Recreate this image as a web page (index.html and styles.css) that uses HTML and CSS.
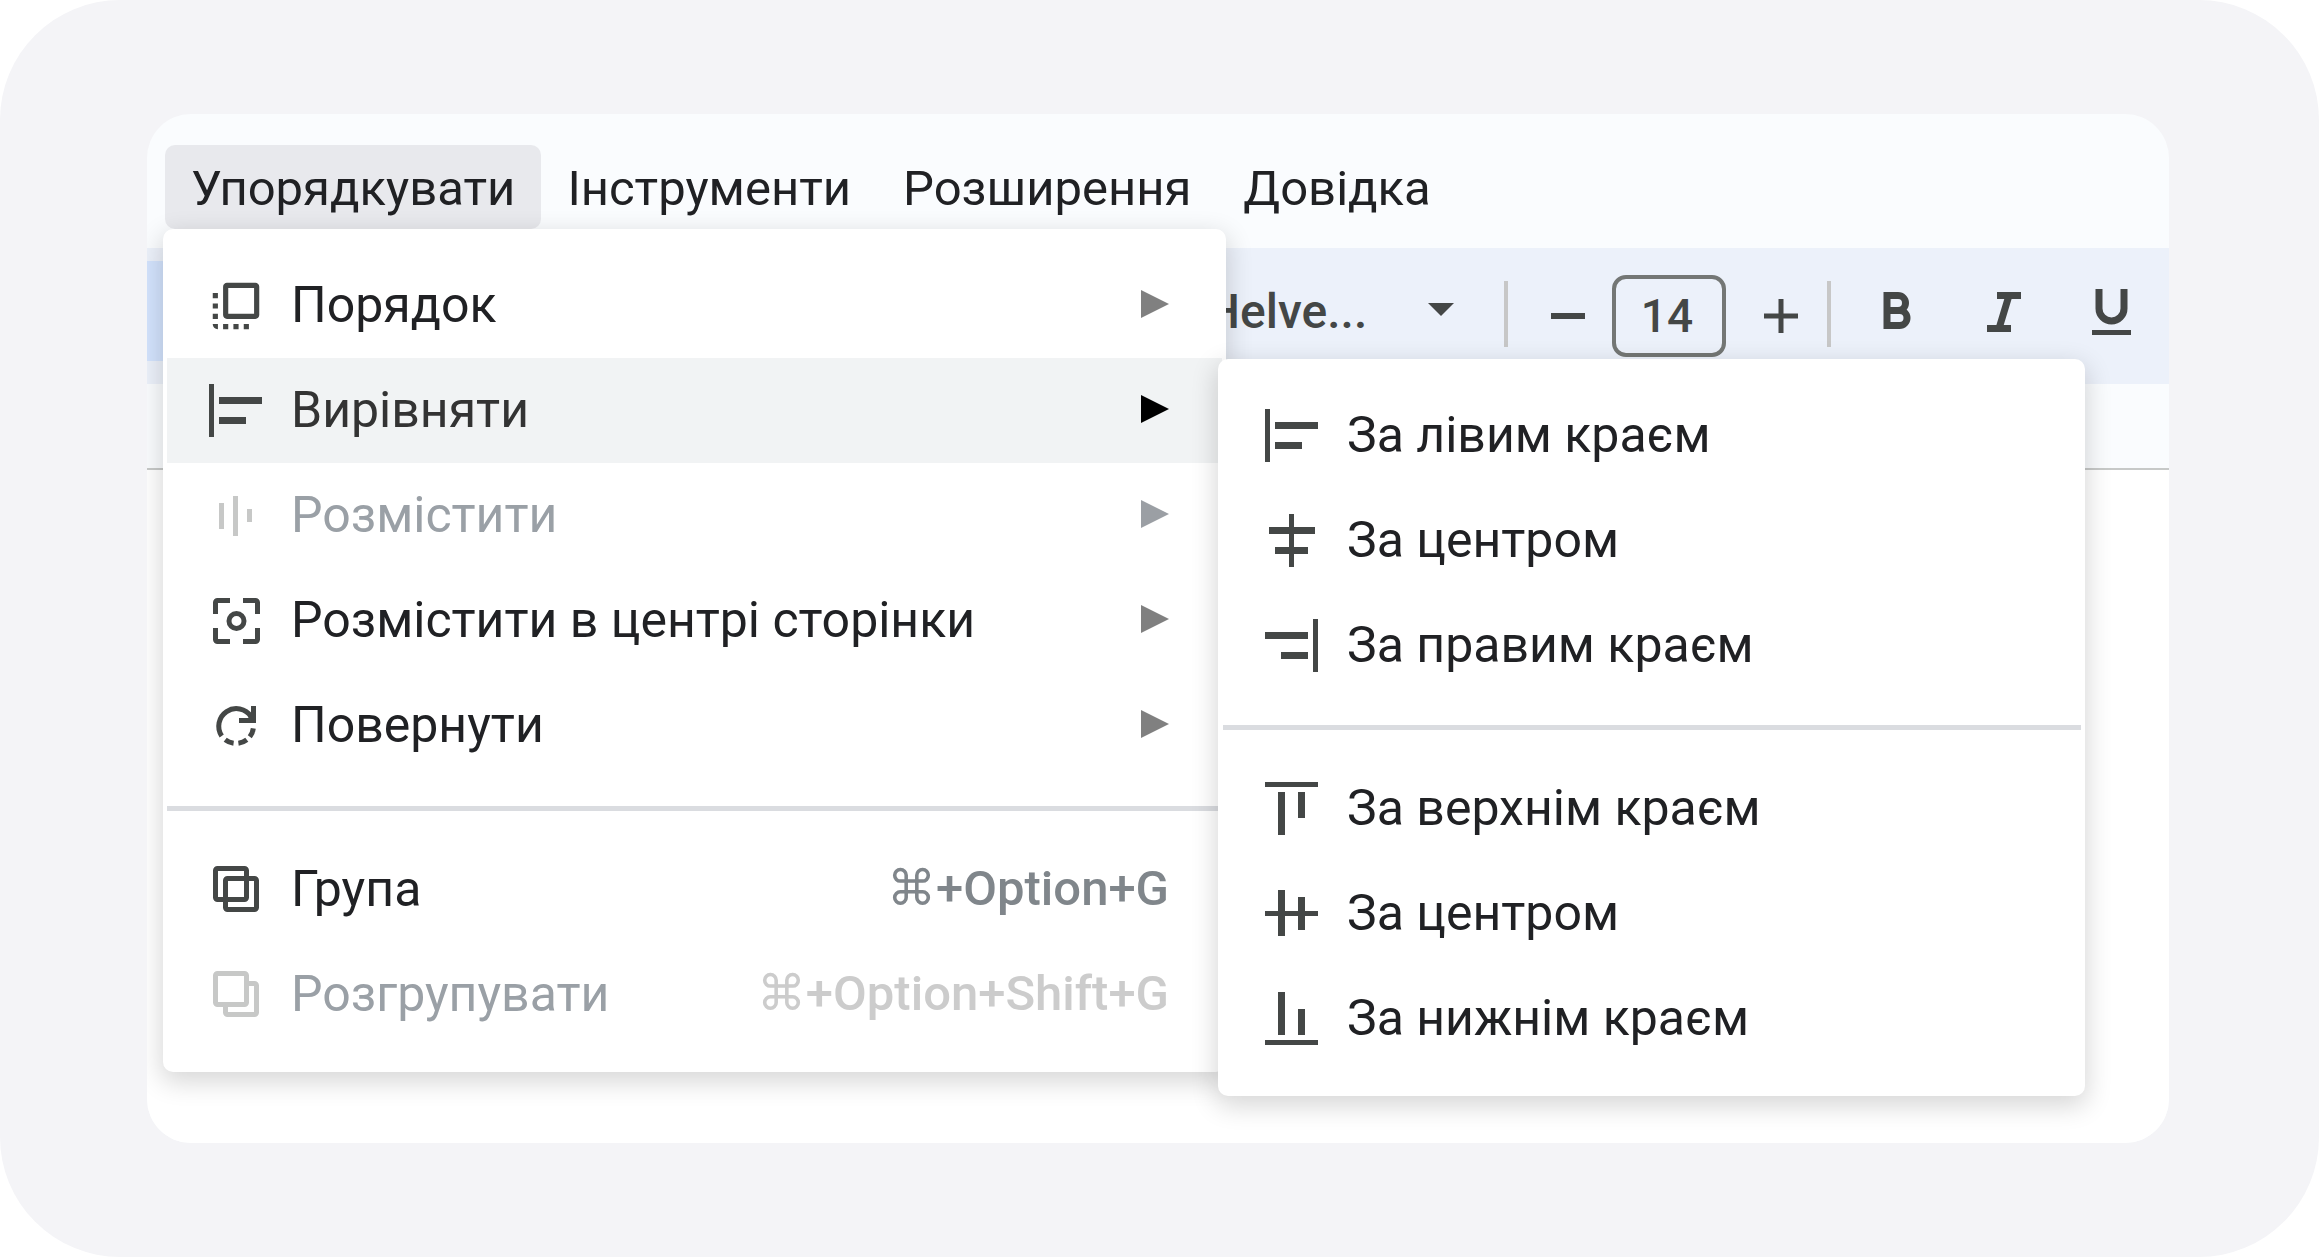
FILE: index.html
```html
<!DOCTYPE html>
<html lang="uk">
<head>
<meta charset="utf-8">
<title>Упорядкувати</title>
<link rel="stylesheet" href="styles.css">
</head>
<body>
<main class="scene">
  <section class="editor">
    <nav class="menubar">
      <button class="menubar-item is-open" type="button">Упорядкувати</button>
      <button class="menubar-item" type="button">Інструменти</button>
      <button class="menubar-item" type="button">Розширення</button>
      <button class="menubar-item" type="button">Довідка</button>
    </nav>

    <div class="toolbar">
      <button class="tool-active" type="button" aria-label="Вибрати"></button>
      <div class="font-picker">
        <select class="font-select" aria-label="Шрифт"><option>Helve...</option></select>
        <svg class="caret" viewBox="0 0 26 13"><path d="M0 0h26L13 13z"/></svg>
      </div>
      <span class="separator"></span>
      <div class="size-picker">
        <button class="tool" type="button" aria-label="Зменшити"><svg class="glyph" viewBox="0 0 34 40"><path d="M0 20h34" stroke-width="6"/></svg></button>
        <input class="size-input" type="text" value="14" aria-label="Розмір шрифту">
        <button class="tool" type="button" aria-label="Збільшити"><svg class="glyph" viewBox="0 0 34 40"><path d="M0 20h34M17 3v34" stroke-width="5"/></svg></button>
      </div>
      <span class="separator"></span>
      <div class="style-tools">
        <button class="tool" type="button" aria-label="Жирний"><svg class="glyph-lg" viewBox="0 0 40 48"><path d="M10 8.500h11a7.500 7.500 0 0 1 0 15H10zM10 23.500h12.500a7.500 7.500 0 0 1 0 15H10z" stroke-width="7"/></svg></button>
        <button class="tool" type="button" aria-label="Курсив"><svg class="glyph-lg" viewBox="0 0 40 48"><path d="M13 8.500h24M3 41.500h24M25 8.500L15 41.500" stroke-width="7"/></svg></button>
        <button class="tool" type="button" aria-label="Підкреслений"><svg class="glyph-lg" viewBox="0 0 40 48"><path d="M8 2v19.500a12.500 12.500 0 0 0 25 0V2" stroke-width="7"/><path d="M1 45.500h39" stroke-width="5"/></svg></button>
      </div>
    </div>

    <div class="ruler"></div>
    <div class="canvas"></div>

    <ul class="menu">
      <li class="menu-row">
        <button class="menu-item" type="button">
          <svg class="icon" viewBox="0 0 24 24"><path d="M3 13h2v-2H3v2zm0 4h2v-2H3v2zm2 4v-2H3c0 1.100.890 2 2 2zM3 9h2V7H3v2zm12 12h2v-2h-2v2zm4.500-18h-11C7.670 3 7 3.670 7 4.500v11c0 .830.670 1.500 1.500 1.500h11c.830 0 1.500-.670 1.500-1.500v-11c0-.830-.670-1.500-1.500-1.500zM19 15H9V5h10v10zm-8 6h2v-2h-2v2zm-4 0h2v-2H7v2z"/></svg>
          <span class="label">Порядок</span>
          <svg class="arrow" viewBox="0 0 28 28"><path d="M0 0l28 14L0 28z"/></svg>
        </button>
      </li>
      <li class="menu-row">
        <button class="menu-item is-active" type="button">
          <svg class="icon" viewBox="0 0 62 62"><path d="M4 4h5v53H4zM14 17h43v7H14zM14 37h27v7H14z"/></svg>
          <span class="label">Вирівняти</span>
          <svg class="arrow" viewBox="0 0 28 28"><path d="M0 0l28 14L0 28z"/></svg>
        </button>
        <ul class="menu submenu">
          <li class="menu-row"><button class="menu-item" type="button">
            <svg class="icon" viewBox="0 0 62 62"><path d="M4 4h5v53H4zM14 17h43v7H14zM14 37h27v7H14z"/></svg>
            <span class="label">За лівим краєм</span></button></li>
          <li class="menu-row"><button class="menu-item" type="button">
            <svg class="icon" viewBox="0 0 62 62"><path d="M28 4h5v53h-5zM8 17h46v7H8zM14 37h33v7H14z"/></svg>
            <span class="label">За центром</span></button></li>
          <li class="menu-row"><button class="menu-item" type="button">
            <svg class="icon" viewBox="0 0 62 62"><path d="M52 4h5v53h-5zM4 17h43v7H4zM20 37h27v7H20z"/></svg>
            <span class="label">За правим краєм</span></button></li>
          <li class="divider" role="separator"></li>
          <li class="menu-row"><button class="menu-item" type="button">
            <svg class="icon" viewBox="0 0 62 62"><path d="M4 4h53v5H4zM17 14h7v43h-7zM37 14h7v26h-7z"/></svg>
            <span class="label">За верхнім краєм</span></button></li>
          <li class="menu-row"><button class="menu-item" type="button">
            <svg class="icon" viewBox="0 0 62 62"><path d="M4 28h53v5H4zM17 7h7v46h-7zM37 14h7v33h-7z"/></svg>
            <span class="label">За центром</span></button></li>
          <li class="menu-row"><button class="menu-item" type="button">
            <svg class="icon" viewBox="0 0 62 62"><path d="M4 52h53v5H4zM17 4h7v43h-7zM37 21h7v26h-7z"/></svg>
            <span class="label">За нижнім краєм</span></button></li>
        </ul>
      </li>
      <li class="menu-row">
        <button class="menu-item" type="button" disabled>
          <svg class="icon" viewBox="0 0 62 62"><path d="M14 18h5v26h-5zM28 11h5v40h-5zM42 24h5v13h-5z"/></svg>
          <span class="label">Розмістити</span>
          <svg class="arrow" viewBox="0 0 28 28"><path d="M0 0l28 14L0 28z"/></svg>
        </button>
      </li>
      <li class="menu-row">
        <button class="menu-item" type="button">
          <svg class="icon line" viewBox="0 0 62 62"><path d="M10.500 24V12.500a2 2 0 0 1 2-2H25M38 10.500h12.500a2 2 0 0 1 2 2V24M52.500 38v11.500a2 2 0 0 1-2 2H38M25 51.500H12.500a2 2 0 0 1-2-2V38"/><circle cx="31.500" cy="31" r="7.500"/></svg>
          <span class="label">Розмістити в центрі сторінки</span>
          <svg class="arrow" viewBox="0 0 28 28"><path d="M0 0l28 14L0 28z"/></svg>
        </button>
      </li>
      <li class="menu-row">
        <button class="menu-item" type="button">
          <svg class="icon line" viewBox="0 0 62 62"><path d="M46 21.500A17.500 17.500 0 1 0 16.700 41M20.200 44.800A17.500 17.500 0 0 0 28.600 48.300M33.400 48.300A17.500 17.500 0 0 0 41.800 44.800M44.800 41.800A17.500 17.500 0 0 0 48.300 33.400"/><path class="solid" d="M46 11h5v17H34v-5h9l3-3z"/></svg>
          <span class="label">Повернути</span>
          <svg class="arrow" viewBox="0 0 28 28"><path d="M0 0l28 14L0 28z"/></svg>
        </button>
      </li>
      <li class="divider" role="separator"></li>
      <li class="menu-row">
        <button class="menu-item" type="button">
          <svg class="icon line" viewBox="0 0 62 62"><rect x="10.500" y="9.500" width="31" height="31" rx="2"/><rect x="20.500" y="19.500" width="31" height="31" rx="2"/></svg>
          <span class="label">Група</span>
          <kbd class="shortcut">⌘+Option+G</kbd>
        </button>
      </li>
      <li class="menu-row">
        <button class="menu-item" type="button" disabled>
          <svg class="icon line" viewBox="0 0 62 62"><rect x="10.500" y="9.500" width="31" height="31" rx="2"/><path d="M44 19.500h5.500a2 2 0 0 1 2 2v27a2 2 0 0 1-2 2h-27a2 2 0 0 1-2-2V43"/></svg>
          <span class="label">Розгрупувати</span>
          <kbd class="shortcut">⌘+Option+Shift+G</kbd>
        </button>
      </li>
    </ul>
  </section>
</main>
</body>
</html>
```
FILE: styles.css
```css
*, *::before, *::after { box-sizing: border-box; }

body {
  margin: 0;
  background: #fff;
  color: #202124;
  font-family: Roboto, "Liberation Sans", sans-serif;
  font-size: 49px;
}

button, input, select {
  margin: 0;
  padding: 0;
  border: 0;
  background: none;
  color: inherit;
  font: inherit;
}

.scene {
  display: flex;
  min-height: 100vh;
  padding: 114px 150px 114px 147px;
  border-radius: 120px;
  background: #f4f4f7;
}

.editor {
  position: relative;
  display: flex;
  flex: 1;
  flex-direction: column;
  overflow: hidden;
  border-radius: 44px;
  background: #fafcfe;
}

/* Menu bar */
.menubar {
  display: flex;
  height: 134px;
  padding: 31px 18px 0;
}

.menubar-item {
  height: 84px;
  padding: 2px 26px 0;
  border-radius: 10px;
  white-space: nowrap;
}

.menubar-item.is-open { background: #e8e9ed; }

/* Toolbar */
.toolbar {
  display: flex;
  align-items: center;
  height: 136px;
  padding-bottom: 10px;
  background: #ecf1fa;
  color: #444746;
}

.tool-active {
  width: 100px;
  height: 100px;
  background: #d3e3fd;
}

.font-picker {
  display: flex;
  align-items: center;
  margin-left: 959px;
}

.font-select {
  width: 222px;
  height: 60px;
  appearance: none;
  font-size: 48px;
  font-weight: 500;
}

.caret {
  width: 26px;
  height: 13px;
  margin-bottom: 4px;
  fill: currentColor;
}

.separator {
  width: 4px;
  height: 66px;
  margin-top: 6px;
  background: #c7c7c7;
}

.font-picker + .separator { margin-left: 50px; }

.size-picker {
  display: flex;
  align-items: center;
  gap: 27px;
  padding: 9px 29px 0 43px;
}

.size-input {
  width: 114px;
  height: 82px;
  padding-right: 4px;
  border: 4px solid #747775;
  border-radius: 14px;
  font-size: 46px;
  font-weight: 500;
  text-align: center;
}

.size-picker .tool:last-child { margin-left: 11px; }

.tool {
  display: flex;
  align-items: center;
}

.glyph, .glyph-lg {
  fill: none;
  stroke: currentColor;
}

.glyph {
  width: 34px;
  height: 40px;
}

.glyph-lg {
  width: 40px;
  height: 48px;
}

.style-tools {
  display: flex;
  gap: 67px;
  padding-left: 46px;
}

/* Page area */
.ruler {
  height: 86px;
  border-bottom: 2px solid #c7c9c8;
}

.canvas {
  flex: 1;
  background: #fff;
}

/* Drop-down menus */
.menu {
  position: absolute;
  top: 115px;
  left: 16px;
  width: 1063px;
  margin: 0;
  padding: 24px 4px 25px;
  border-radius: 10px;
  background: #fff;
  box-shadow: 0 8px 26px 2px rgba(0, 0, 0, .16);
  list-style: none;
}

.submenu {
  top: 1px;
  left: calc(100% - 4px);
  width: 867px;
  padding-left: 5px;
}

.menu-row { position: relative; }

.menu-item {
  display: flex;
  align-items: center;
  gap: 24px;
  width: 100%;
  height: 105px;
  padding: 0 53px 0 38px;
  text-align: left;
  white-space: nowrap;
}

.menu-item.is-active {
  background: #f1f3f4;
  color: #333;
}

.menu-item:disabled { color: #9aa0a6; }

.label {
  flex: 1;
  padding-bottom: 2px;
  font-size: 50px;
}

.icon {
  width: 62px;
  height: 62px;
  fill: #444746;
}

.icon.line {
  fill: none;
  stroke: #444746;
  stroke-width: 5px;
}

.icon .solid {
  fill: #444746;
  stroke: none;
}

.menu-item:disabled .icon { fill: #c7c8c7; }

.menu-item:disabled .icon.line {
  fill: none;
  stroke: #c7c8c7;
}

.arrow {
  width: 28px;
  height: 28px;
  margin-bottom: 4px;
  fill: #808080;
}

.is-active .arrow { fill: #000; }

.menu-item:disabled .arrow { fill: #9b9fa4; }

.shortcut {
  padding-bottom: 2px;
  color: #80868b;
  font-family: inherit;
  font-size: 49px;
  font-weight: 500;
}

.menu-item:disabled .shortcut { color: #ccc; }

.divider {
  height: 5px;
  margin: 28px 0 26px;
  background: #dadce0;
}

.submenu .divider { margin-top: 27px; }
```
